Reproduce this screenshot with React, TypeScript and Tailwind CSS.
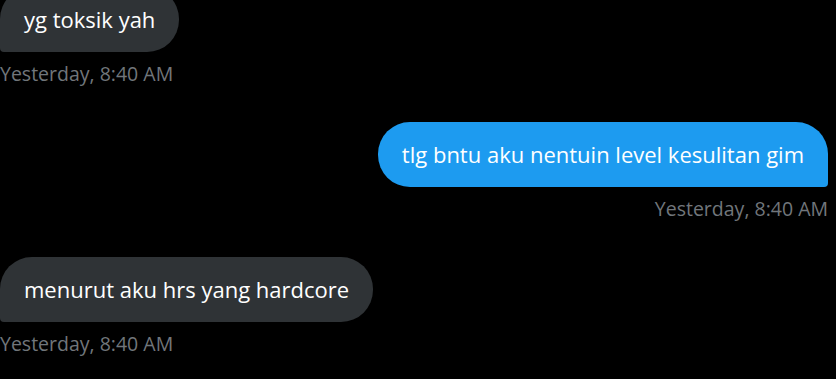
import React from "react";

const font = { fontFamily: '"Open Sans", "Noto Sans", sans-serif' };

const Stamp = ({ right }: { right?: boolean }) => (
  <div
    className={`mt-3 h-5 text-[19.5px] leading-5 text-[#71767b] ${right ? "text-right" : ""}`}
  >
    Yesterday, 8:40 AM
  </div>
);

export default function App() {
  return (
    <div className="w-[836px] h-[379px] overflow-hidden bg-black pr-2" style={font}>
      <div className="-mt-[13px] flex flex-col">
        <div className="flex flex-col items-start">
          <div className="h-[65px] flex items-center px-6 rounded-[32px] rounded-bl-[4px] bg-[#2f3336] text-white text-[22px]">
            yg toksik yah
          </div>
          <Stamp />
        </div>

        <div className="mt-[38px] flex flex-col items-end">
          <div className="h-[65px] flex items-center px-6 rounded-[32px] rounded-br-[4px] bg-[#1d9bf0] text-white text-[22px]">
            tlg bntu aku nentuin level kesulitan gim
          </div>
          <Stamp right />
        </div>

        <div className="mt-[38px] flex flex-col items-start">
          <div className="h-[65px] flex items-center px-6 rounded-[32px] rounded-bl-[4px] bg-[#2f3336] text-white text-[22px]">
            menurut aku hrs yang hardcore
          </div>
          <Stamp />
        </div>
      </div>
    </div>
  );
}
